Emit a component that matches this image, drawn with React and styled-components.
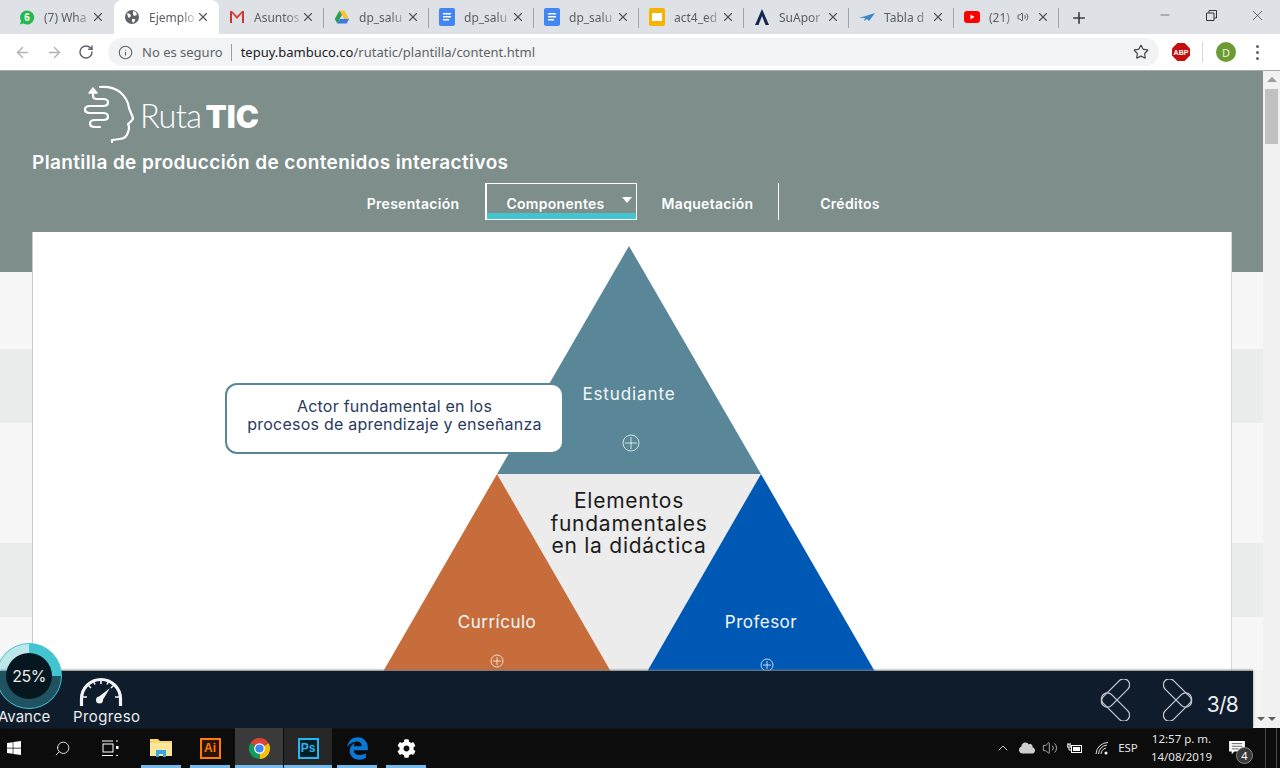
import React from 'react'
import styled, { createGlobalStyle } from 'styled-components'
import { ArrowLeft, ArrowRight, RotateCw, Info, Star, X, Plus, Minus, Search, ChevronUp, Volume2 } from 'lucide-react'
import { FaWindows, FaCog, FaCloud } from 'react-icons/fa'
import { FaEdgeLegacy } from 'react-icons/fa6'

const GlobalStyle = createGlobalStyle`
  html, body { margin: 0; padding: 0; height: 100%; overflow: hidden; }
  * { box-sizing: border-box; }
  body { font-family: "Noto Sans", sans-serif; }
`

const Screen = styled.div`
  width: 1280px;
  height: 768px;
  display: flex;
  flex-direction: column;
  overflow: hidden;
  background: #fff;
`

/* browser chrome */
const TabStrip = styled.div`
  height: 34px;
  padding-left: 9px;
  display: flex;
  background: #dee1e6;
`
const Tab = styled.div`
  width: 105px;
  height: 34px;
  padding: 0 10px;
  display: flex;
  align-items: center;
  position: relative;
  border-radius: 8px 8px 0 0;
  background: ${p => (p.$active ? '#fff' : 'transparent')};
`
const FavSlot = styled.span`
  width: 16px;
  flex: none;
  display: flex;
  justify-content: center;
`
const TabSep = styled.span`
  position: absolute;
  right: 0;
  top: 8px;
  height: 20px;
  width: 1px;
  background: #a0a4a9;
`
const TabTitle = styled.span`
  width: ${p => (p.$short ? 24 : 46)}px;
  margin-left: 9px;
  overflow: hidden;
  white-space: nowrap;
  font-size: 12px;
  color: #5a5d62;
  -webkit-mask-image: linear-gradient(90deg, #000 70%, rgba(0, 0, 0, 0.25));
  mask-image: linear-gradient(90deg, #000 70%, rgba(0, 0, 0, 0.25));
`
const SoundIcon = styled(Volume2)`
  margin-left: 4px;
  color: #5a5d62;
`
const TabClose = styled(X)`
  position: absolute;
  right: 9px;
  top: 10px;
  color: #53565a;
`
const NewTab = styled(Plus)`
  margin: 9px 0 0 11px;
  color: #3c4043;
`
const WindowButtons = styled.div`
  margin-left: auto;
  display: flex;
  color: #333;
`
const WindowButton = styled.div`
  width: 46px;
  height: 30px;
  display: flex;
  align-items: center;
  justify-content: center;
`
const Toolbar = styled.div`
  height: 37px;
  display: flex;
  align-items: center;
  padding-left: 14px;
  background: #fff;
  border-bottom: 1px solid #a9abad;
`
const NavIcon = styled.span`
  width: 32px;
  display: flex;
  color: ${p => (p.$on ? '#5f6368' : '#b0b3b8')};
`
const Omnibox = styled.div`
  width: 1051px;
  height: 28px;
  margin-left: -2px;
  padding-left: 10px;
  display: flex;
  align-items: center;
  border-radius: 14px;
  background: #f1f3f4;
  font-size: 13px;
  color: #5f6368;
`
const Security = styled.span`
  margin-left: 9px;
  padding-right: 8px;
  border-right: 1px solid #9aa0a6;
  line-height: 17px;
`
const Url = styled.span`
  margin-left: 9px;
  b { font-weight: 400; color: #202124; }
`
const StarIcon = styled(Star)`
  margin-left: auto;
  margin-right: 10px;
  color: #44474b;
`
const Abp = styled.span`
  width: 18px;
  height: 18px;
  margin-left: 13px;
  display: flex;
  align-items: center;
  justify-content: center;
  clip-path: polygon(30% 0, 70% 0, 100% 30%, 100% 70%, 70% 100%, 30% 100%, 0 70%, 0 30%);
  background: #c70d0d;
  color: #fff;
  font: 700 7px "Liberation Sans", sans-serif;
`
const ToolSep = styled.span`
  width: 1px;
  height: 20px;
  margin: 0 13px 0 12px;
  background: #d4d6d9;
`
const Avatar = styled.span`
  width: 20px;
  height: 20px;
  display: flex;
  align-items: center;
  justify-content: center;
  border-radius: 50%;
  background: #6c9b34;
  color: #e9f1de;
  font-size: 11px;
`
const MoreDots = styled.span`
  margin-left: 20px;
  display: flex;
  flex-direction: column;
  gap: 3px;
  i { width: 3px; height: 3px; border-radius: 50%; background: #5f6368; }
`

/* page */
const Body = styled.div`
  flex: 1;
  min-height: 0;
  display: flex;
`
const Main = styled.div`
  flex: 1;
  min-width: 0;
  display: flex;
  flex-direction: column;
  background: #f3f3f3;
`
const Page = styled.div`
  flex: 1;
  min-height: 0;
  position: relative;
  overflow: hidden;
  font-family: Inter, sans-serif;
`
const Hero = styled.header`
  height: 201px;
  padding: 14px 0 0 32px;
  background: #7d8e8b;
  color: #fff;
`
const Brand = styled.div`
  margin-left: 51px;
  display: flex;
  align-items: flex-end;
  height: 58px;
`
const BrandName = styled.div`
  margin: 0 0 9px 3px;
  font-size: 32.5px;
  line-height: 34px;
  font-weight: 300;
  letter-spacing: -0.6px;
  font-family: Lato, sans-serif;
  b { margin-left: 4px; font-weight: 900; font-size: 31px; letter-spacing: 0; font-family: Inter, sans-serif; }
`
const Title = styled.h1`
  margin: 8px 0 0 0;
  font-size: 19px;
  line-height: 24px;
  font-weight: 600;
  letter-spacing: 0.38px;
`
const Menu = styled.nav`
  margin: 8px 0 0 309px;
  display: flex;
`
const MenuItem = styled.div`
  width: ${p => p.$w}px;
  height: 37px;
  padding-top: 4px;
  position: relative;
  display: flex;
  align-items: center;
  justify-content: center;
  font-size: 14px;
  font-weight: 600;
  letter-spacing: 0.3px;
  border-right: ${p => (p.$line ? '1px solid #fff' : '0')};
`
const ActiveItem = styled(MenuItem)`
  padding: 4px 12px 0 0;
  border: 1px solid #fff;
  border-left-width: 2px;
  &::after {
    content: '';
    position: absolute;
    left: 0;
    right: 0;
    bottom: 0;
    height: 6px;
    background: #43c5d1;
  }
`
const Caret = styled.span`
  position: absolute;
  right: 4px;
  top: 13px;
  border: 5.5px solid transparent;
  border-top: 6px solid #fff;
  border-bottom: 0;
`
const Band = styled.div`
  height: ${p => p.$h}px;
  background: ${p => (p.$dark ? '#ebeded' : '#f7f7f7')};
`
const Card = styled.section`
  position: absolute;
  left: 32px;
  top: 161px;
  width: 1200px;
  height: 460px;
  background: #fff;
  border-left: 1px solid #c9cbcb;
  border-right: 1px solid #d6d8d8;
`
const Pyramid = styled.svg`
  position: absolute;
  left: -1px;
  top: 0;
`
const NodeLabel = styled.div`
  position: absolute;
  left: ${p => p.$x}px;
  top: ${p => p.$y}px;
  transform: translateX(-50%);
  white-space: nowrap;
  font-size: 17px;
  line-height: 22px;
  letter-spacing: ${p => p.$sp || 0.5}px;
  color: #f4f7f8;
`
const CenterLabel = styled.div`
  position: absolute;
  left: ${p => p.$x}px;
  top: ${p => p.$y}px;
  transform: translateX(-50%);
  white-space: nowrap;
  font-size: 21px;
  line-height: 22.5px;
  letter-spacing: 0.75px;
  text-align: center;
  color: #1c1c1c;
`
const Tooltip = styled.div`
  position: absolute;
  left: 192px;
  top: 151px;
  width: 339px;
  height: 71px;
  padding-bottom: 8px;
  display: flex;
  align-items: center;
  justify-content: center;
  text-align: center;
  border: 2px solid #5a8797;
  border-radius: 12px;
  background: #fff;
  color: #2a3a5e;
  font-size: 16px;
  line-height: 18px;
  letter-spacing: 0.23px;
`

/* bottom bar of the page */
const Footer = styled.footer`
  height: 57px;
  margin-right: 10px;
  display: flex;
  align-items: flex-end;
  position: relative;
  background: #0f1c2b;
  box-shadow: 0 -1px 2px #777c80;
  color: #e8ecef;
  font-family: Inter, sans-serif;
`
const Donut = styled.div`
  position: absolute;
  left: -4px;
  top: -28px;
  width: 66px;
  height: 66px;
  display: flex;
  align-items: center;
  justify-content: center;
  border-radius: 50%;
  border: 1px solid #43c5d1;
  background: conic-gradient(#43c5d1 0 25%, rgba(67, 197, 209, 0.32) 25% 100%);
`
const DonutHole = styled.div`
  width: 46px;
  height: 46px;
  display: flex;
  align-items: center;
  justify-content: center;
  border-radius: 50%;
  background: #07171f;
  font-size: 16px;
  letter-spacing: -0.5px;
`
const FootLabel = styled.div`
  font-size: 15px;
  line-height: 20px;
  padding-bottom: 1px;
  letter-spacing: 0.4px;
`
const AvanceLabel = styled(FootLabel)`
  margin-left: -2px;
  width: 75px;
  letter-spacing: 0;
`
const Progress = styled.div`
  display: flex;
  flex-direction: column;
  align-items: flex-start;
`
const GaugeIcon = styled.svg`
  margin: 0 0 1px 5px;
`
const Pager = styled.div`
  margin-left: auto;
  height: 100%;
  padding-right: 15px;
  display: flex;
  align-items: center;
`
const PagerArrow = styled.svg`
  margin-right: ${p => p.$gap}px;
`
const PagerCount = styled.span`
  padding-top: 9px;
  font-size: 21px;
  letter-spacing: -0.8px;
`
const Scrollbar = styled.div`
  width: 17px;
  padding-top: 6px;
  display: flex;
  flex-direction: column;
  align-items: center;
  position: relative;
  background: #f1f1f1;
`
const UpArrow = styled.span`
  border: 5px solid transparent;
  border-bottom: 5px solid #9c9c9c;
  border-top: 0;
`
const Thumb = styled.div`
  width: 13px;
  height: 55px;
  margin-top: 7px;
  background: #c1c1c1;
`
const DownArrow = styled.span`
  position: absolute;
  bottom: 7px;
  left: ${p => p.$x}px;
  border: 4px solid transparent;
  border-top: 4px solid #606060;
  border-bottom: 0;
`

/* windows taskbar */
const Taskbar = styled.div`
  height: 40px;
  display: flex;
  background: #0c0c0c;
  color: #fff;
`
const TaskSlot = styled.div`
  width: ${p => p.$w || 48}px;
  margin-left: ${p => p.$ml || 0}px;
  position: relative;
  display: flex;
  align-items: center;
  justify-content: ${p => (p.$start ? 'flex-start' : 'center')};
  padding-left: ${p => (p.$start ? 6 : 0)}px;
  background: ${p => p.$bg || 'transparent'};
  &::after {
    content: '';
    display: ${p => (p.$open ? 'block' : 'none')};
    position: absolute;
    bottom: 0;
    left: ${p => (p.$bg ? 0 : 4)}px;
    right: ${p => (p.$bg ? 0 : 4)}px;
    height: 3px;
    background: #76b9ed;
  }
`
const MirrorSearch = styled(Search)`
  transform: scaleX(-1);
`
const AppBadge = styled.span`
  width: 21px;
  height: 21px;
  display: flex;
  align-items: center;
  justify-content: center;
  border: 2px solid ${p => p.$c};
  background: ${p => p.$bg};
  color: ${p => p.$c};
  font: 700 12px "Liberation Sans", sans-serif;
`
const Tray = styled.div`
  margin-left: auto;
  display: flex;
`
const TrayText = styled.span`
  font-size: 11.5px;
  line-height: 18px;
  text-align: center;
  color: #e4e4e4;
`
const Notice = styled.span`
  position: relative;
  display: flex;
  margin-right: 9px;
`
const NoticeCount = styled.span`
  position: absolute;
  left: 7px;
  top: 6px;
  width: 17px;
  height: 17px;
  display: flex;
  align-items: center;
  justify-content: center;
  border-radius: 50%;
  border: 1px solid #888;
  background: #3a3a3a;
  font-size: 11px;
`
const DesktopEdge = styled.div`
  width: 12px;
  margin: 0 3px 0 4px;
  border-left: 1px solid #4a4a4a;
  border-right: 1px solid #4a4a4a;
`

const Favicon = ({ kind }) => {
  switch (kind) {
    case 'whatsapp':
      return (
        <svg width="17" height="17" viewBox="0 0 16 16">
          <path d="M8 1a7 7 0 0 0-6 10.5L1 15l3.6-1A7 7 0 1 0 8 1z" fill="#25b84c" />
          <text x="8" y="11.5" textAnchor="middle" fontSize="10" fontWeight="700" fill="#fff" fontFamily="Liberation Sans">6</text>
        </svg>
      )
    case 'globe':
      return (
        <svg width="16" height="16" viewBox="0 0 16 16">
          <circle cx="8" cy="8" r="7" fill="#5f6368" />
          <path d="M3 4l3 1 1 2-2 2-1-1zM9 2l3 1 1 3-3 1-1-2zM8 10l3 0 0 2-2 2-1-2z" fill="#fff" />
        </svg>
      )
    case 'gmail':
      return (
        <svg width="16" height="16" viewBox="0 0 16 16">
          <path d="M1 2h2v12H1zM13 2h2v12h-2z" fill="#c9382c" />
          <path d="M1 2h2l5 5 5-5h2L8 10z" fill="#d9402f" />
        </svg>
      )
    case 'drive':
      return (
        <svg width="17" height="16" viewBox="0 0 17 16">
          <path d="M5.8 1h5.2l5 9h-5.2z" fill="#fbc02d" />
          <path d="M5.8 1L.8 10l2.6 5 5-9z" fill="#2e9e4f" />
          <path d="M3.4 15h10l2.6-5H6z" fill="#3b78e7" />
        </svg>
      )
    case 'docs':
      return (
        <svg width="16" height="18" viewBox="0 0 16 18">
          <rect width="16" height="18" rx="2" fill="#4285f4" />
          <path d="M4 5h8v1.4H4zM4 8h8v1.4H4zM4 11h6v1.4H4z" fill="#fff" />
        </svg>
      )
    case 'slides':
      return (
        <svg width="16" height="18" viewBox="0 0 16 18">
          <rect width="16" height="18" rx="2" fill="#f4b400" />
          <rect x="3" y="5" width="10" height="8" fill="#fff" />
        </svg>
      )
    case 'aporte':
      return (
        <svg width="16" height="18" viewBox="0 0 16 18">
          <path d="M8 1L1 17h3.5L8 8l3.5 9H15z" fill="#12284f" />
        </svg>
      )
    case 'tabla':
      return (
        <svg width="16" height="16" viewBox="0 0 16 16">
          <path d="M0 9l16-5-6 8-2-2-3 2 1-3z" fill="#3f86c6" />
        </svg>
      )
    default:
      return (
        <svg width="16" height="16" viewBox="0 0 16 16">
          <rect y="2" width="16" height="12" rx="3" fill="#f00" />
          <path d="M6.5 5.5v5l4-2.500z" fill="#fff" />
        </svg>
      )
  }
}

const tabs = [
  { kind: 'whatsapp', title: '(7) Wha' },
  { kind: 'globe', title: 'Ejemplo', active: true },
  { kind: 'gmail', title: 'Asuntos', sep: true },
  { kind: 'drive', title: 'dp_salu', sep: true },
  { kind: 'docs', title: 'dp_salu', sep: true },
  { kind: 'docs', title: 'dp_salu', sep: true },
  { kind: 'slides', title: 'act4_ed', sep: true },
  { kind: 'aporte', title: 'SuApor', sep: true },
  { kind: 'tabla', title: 'Tabla d', sep: true },
  { kind: 'youtube', title: '(21)', sound: true, sep: true },
]

const ChromeLogo = () => (
  <svg width="23" height="23" viewBox="0 0 24 24">
    <path d="M12 12L2.470 6.500A11 11 0 0 1 21.530 6.500z" fill="#db4437" />
    <path d="M12 12L21.530 6.500A11 11 0 0 1 12 23z" fill="#f4c20d" />
    <path d="M12 12L12 23A11 11 0 0 1 2.470 6.500z" fill="#0f9d58" />
    <circle cx="12" cy="12" r="5.600" fill="#fff" />
    <circle cx="12" cy="12" r="4.300" fill="#4285f4" />
  </svg>
)

const Logo = () => (
  <svg width="54" height="58" viewBox="83 85 54 58" fill="none" stroke="#fff" strokeLinecap="round" strokeLinejoin="round">
    <path d="M93 92V96Q93 99 97 99H103Q108 99 108 102.500Q108 106 103 106H90Q85 106 85 109.500Q85 113 90 113H103Q108 113 108 116.500Q108 120 103 120H95Q90 120 90 123.500Q90 127 95 127H100" strokeWidth="2.200" />
    <path d="M89 93L93 88L97 93Z" fill="#fff" strokeWidth="1.500" />
    <path d="M100 87Q112 86 120 92Q128 99 129 108L133 118Q133 120 128 124Q130 128 128 132Q127 138 120 139L112 140V142" strokeWidth="2.200" />
  </svg>
)

const PlusCircle = ({ x, y, r }) => (
  <g fill="none" stroke="#fff" strokeOpacity="0.75" strokeWidth="1">
    <circle cx={x} cy={y} r={r} />
    <path d={`M${x - r + 2} ${y}H${x + r - 2}M${x} ${y - r + 2}V${y + r - 2}`} />
  </g>
)

const Gauge = () => (
  <GaugeIcon width="46" height="31" viewBox="0 0 46 31" fill="none" stroke="#f1f3f5">
    <path d="M3.500 31V24A19.500 19.500 0 0 1 42.500 24V31" strokeWidth="3.200" />
    <path d="M23 5v4M10 10l3 3M36 10l-3 3M5 22h4M41 22h-4M15.500 6.500l1.500 3M30.500 6.500l-1.500 3" strokeWidth="1.600" />
    <path d="M32 13L24.500 25.500 20.500 22z" fill="#f1f3f5" stroke="none" />
    <circle cx="21.500" cy="25" r="3.500" fill="#f1f3f5" stroke="none" />
  </GaugeIcon>
)

const PagerChevron = ({ flip, gap }) => (
  <PagerArrow $gap={gap} width="30" height="42" viewBox="0 0 30 42" fill="none" stroke="#c5cacf" strokeWidth="1.300">
    <g transform={flip ? 'matrix(-1 0 0 1 30 0)' : undefined}>
      <rect x="-2" y="8" width="35" height="12" rx="6" transform="rotate(-45 15.500 14)" />
      <rect x="-2" y="22" width="35" height="12" rx="6" transform="rotate(45 15.500 28)" />
    </g>
  </PagerArrow>
)

const Explorer = () => (
  <svg width="22" height="20" viewBox="0 0 22 20">
    <path d="M0 1h8l2 2h12v15H0z" fill="#f7d774" />
    <path d="M0 5h22v13H0z" fill="#fbe59a" />
    <path d="M6 12h10v7h-3v-3H9v3H6z" fill="#38a7e0" />
  </svg>
)

const TaskView = () => (
  <svg width="17" height="17" viewBox="0 0 17 17" fill="none" stroke="#fff" strokeWidth="1">
    <rect x="1" y="4" width="10" height="8" />
    <path d="M0 1h11M0 15.500h11M14 1h2M14 15.500h2" />
    <rect x="14" y="6" width="2.500" height="3" fill="#fff" stroke="none" />
  </svg>
)

const BatteryPlug = () => (
  <svg width="16" height="11" viewBox="0 0 16 11" fill="none" stroke="#fff">
    <rect x="4.500" y="2.500" width="10" height="7" />
    <rect x="6" y="4" width="7" height="4" fill="#fff" stroke="none" />
    <path d="M1 0v2M3 0v2M0 2h4v2H0zM2 4v3h3" strokeWidth="1" />
  </svg>
)

const WifiIcon = () => (
  <svg width="14" height="14" viewBox="0 0 14 14" fill="none" stroke="#e0e0e0" strokeWidth="1">
    <path d="M1 13A12 12 0 0 1 13 1.500M3.500 13A9.500 9.500 0 0 1 12 4M6 13A7 7 0 0 1 11 7" />
    <circle cx="11" cy="12" r="1.500" fill="#fff" stroke="none" />
  </svg>
)

const Chat = () => (
  <svg width="16" height="14" viewBox="0 0 18 16">
    <path d="M0 0h18v12H6l-3 3v-3H0z" fill="#fff" />
    <path d="M3 3h12M3 6h12M3 9h8" stroke="#222" strokeWidth="0.800" />
  </svg>
)

const App = () => (
  <Screen>
    <GlobalStyle />
    <TabStrip>
      {tabs.map((tab, i) => (
        <Tab key={i} $active={tab.active}>
          <FavSlot><Favicon kind={tab.kind} /></FavSlot>
          <TabTitle $short={tab.sound}>{tab.title}</TabTitle>
          {tab.sound && <SoundIcon size={12} />}
          <TabClose size={14} strokeWidth={2} />
          {tab.sep && <TabSep />}
        </Tab>
      ))}
      <NewTab size={18} strokeWidth={2.2} />
      <WindowButtons>
        <WindowButton><Minus size={14} strokeWidth={1} /></WindowButton>
        <WindowButton>
          <svg width="11" height="11" viewBox="0 0 11 11" fill="none" stroke="#333">
            <path d="M.5 3h7.500v7.500H.5zM3 3V.5h7.500V8H8" />
          </svg>
        </WindowButton>
        <WindowButton><X size={17} strokeWidth={1} /></WindowButton>
      </WindowButtons>
    </TabStrip>

    <Toolbar>
      <NavIcon><ArrowLeft size={17} strokeWidth={2} /></NavIcon>
      <NavIcon><ArrowRight size={17} strokeWidth={2} /></NavIcon>
      <NavIcon $on><RotateCw size={16} strokeWidth={2.2} /></NavIcon>
      <Omnibox>
        <Info size={15} strokeWidth={1.8} />
        <Security>No es seguro</Security>
        <Url><b>tepuy.bambuco.co</b>/rutatic/plantilla/content.html</Url>
        <StarIcon size={16} strokeWidth={1.8} />
      </Omnibox>
      <Abp>ABP</Abp>
      <ToolSep />
      <Avatar>D</Avatar>
      <MoreDots><i /><i /><i /></MoreDots>
    </Toolbar>

    <Body>
      <Main>
        <Page>
          <Hero>
            <Brand>
              <Logo />
              <BrandName>Ruta<b>TIC</b></BrandName>
            </Brand>
            <Title>Plantilla de producción de contenidos interactivos</Title>
            <Menu>
              <MenuItem $w={144}>Presentación</MenuItem>
              <ActiveItem $w={152}>Componentes<Caret /></ActiveItem>
              <MenuItem $w={142} $line>Maquetación</MenuItem>
              <MenuItem $w={142}>Créditos</MenuItem>
            </Menu>
          </Hero>
          <Band $h={77} />
          <Band $h={74} $dark />
          <Band $h={120} />
          <Band $h={74} $dark />
          <Band $h={60} />
          <Card>
            <Pyramid width="1200" height="460" viewBox="32 232 1200 460">
              <path d="M629 246L761 474H497z" fill="#5a8797" />
              <path d="M497 474H761L629 702z" fill="#ececec" />
              <path d="M497 474L625 696H369z" fill="#c76d3c" />
              <path d="M761 474L889 696H633z" fill="#0058b5" />
              <PlusCircle x={631} y={443} r={8} />
              <PlusCircle x={497} y={661} r={6} />
              <PlusCircle x={767} y={665} r={6} />
            </Pyramid>
            <NodeLabel $x={596} $y={151} $sp={0.9}>Estudiante</NodeLabel>
            <CenterLabel $x={596} $y={258}>Elementos<br />fundamentales<br />en la didáctica</CenterLabel>
            <NodeLabel $x={464} $y={379}>Currículo</NodeLabel>
            <NodeLabel $x={728} $y={379}>Profesor</NodeLabel>
            <Tooltip>Actor fundamental en los<br />procesos de aprendizaje y enseñanza</Tooltip>
          </Card>
        </Page>

        <Footer>
          <Donut><DonutHole>25%</DonutHole></Donut>
          <AvanceLabel>Avance</AvanceLabel>
          <Progress>
            <Gauge />
            <FootLabel>Progreso</FootLabel>
          </Progress>
          <Pager>
            <PagerChevron gap={33} />
            <PagerChevron flip gap={14} />
            <PagerCount>3/8</PagerCount>
          </Pager>
        </Footer>
      </Main>
      <Scrollbar>
        <UpArrow />
        <Thumb />
        <DownArrow $x={-6} />
        <DownArrow $x={5} />
      </Scrollbar>
    </Body>

    <Taskbar>
      <TaskSlot $w={38} $start><FaWindows size={16} /></TaskSlot>
      <TaskSlot><MirrorSearch size={17} strokeWidth={1.2} /></TaskSlot>
      <TaskSlot><TaskView /></TaskSlot>
      <TaskSlot $ml={3} $open><Explorer /></TaskSlot>
      <TaskSlot $ml={1} $open><AppBadge $c="#ff7c00" $bg="#2b1400">Ai</AppBadge></TaskSlot>
      <TaskSlot $ml={1} $open $bg="#3a3a3a"><ChromeLogo /></TaskSlot>
      <TaskSlot $ml={1} $open $bg="#262626"><AppBadge $c="#22b8f0" $bg="#001d26">Ps</AppBadge></TaskSlot>
      <TaskSlot $ml={1} $open><FaEdgeLegacy size={23} color="#0a78d7" /></TaskSlot>
      <TaskSlot $ml={1} $open><FaCog size={19} /></TaskSlot>
      <Tray>
        <TaskSlot $w={24}><ChevronUp size={16} strokeWidth={1.2} /></TaskSlot>
        <TaskSlot $w={23}><FaCloud size={16} color="#cfcfcf" /></TaskSlot>
        <TaskSlot $w={23}><Volume2 size={16} strokeWidth={1.1} color="#ddd" /></TaskSlot>
        <TaskSlot $w={28}><BatteryPlug /></TaskSlot>
        <TaskSlot $w={26}><WifiIcon /></TaskSlot>
        <TaskSlot $w={26}><TrayText>ESP</TrayText></TaskSlot>
        <TaskSlot $w={81}><TrayText>12:57 p. m.<br />14/08/2019</TrayText></TaskSlot>
        <TaskSlot $w={39}>
          <Notice><Chat /><NoticeCount>4</NoticeCount></Notice>
        </TaskSlot>
        <DesktopEdge />
      </Tray>
    </Taskbar>
  </Screen>
)

export default App
